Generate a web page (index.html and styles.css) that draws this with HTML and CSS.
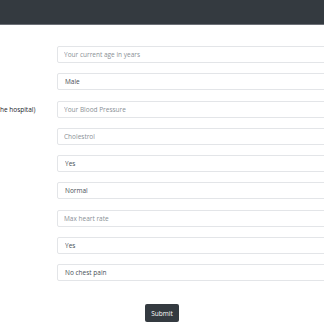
FILE: index.html
```html
<!DOCTYPE html>
<html lang="en">
<head>
  <meta charset="UTF-8" />
  <meta name="viewport" content="width=device-width, initial-scale=1.0"/>
  <title>Heart Disease Prediction</title>
  <link rel="stylesheet" href="styles.css">
</head>
<body>
  <nav class="navbar"></nav>

  <form class="predict-form">
    <div class="form-row">
      <label for="age">Age</label>
      <input type="text" id="age" class="form-control" placeholder="Your current age in years" />
    </div>
    <div class="form-row">
      <label for="sex">Sex</label>
      <select id="sex" class="form-control">
        <option>Male</option>
        <option>Female</option>
      </select>
    </div>
    <div class="form-row">
      <label for="bp">Resting blood pressure (in mm Hg on admission to the hospital)</label>
      <input type="text" id="bp" class="form-control" placeholder="Your Blood Pressure" />
    </div>
    <div class="form-row">
      <label for="chol">Serum cholestoral in mg/dl</label>
      <input type="text" id="chol" class="form-control" placeholder="Cholestrol" />
    </div>
    <div class="form-row">
      <label for="fbs">Fasting blood sugar</label>
      <select id="fbs" class="form-control">
        <option>Yes</option>
        <option>No</option>
      </select>
    </div>
    <div class="form-row">
      <label for="ecg">Resting ECG results</label>
      <select id="ecg" class="form-control">
        <option>Normal</option>
        <option>Abnormal</option>
      </select>
    </div>
    <div class="form-row">
      <label for="thalach">Maximum heart rate</label>
      <input type="text" id="thalach" class="form-control" placeholder="Max heart rate" />
    </div>
    <div class="form-row">
      <label for="exang">Exercise induced angina</label>
      <select id="exang" class="form-control">
        <option>Yes</option>
        <option>No</option>
      </select>
    </div>
    <div class="form-row">
      <label for="cp">Chest pain type</label>
      <select id="cp" class="form-control">
        <option>No chest pain</option>
        <option>Typical angina</option>
      </select>
    </div>

    <div class="submit-row">
      <button type="submit" class="btn-dark">Submit</button>
    </div>
  </form>
</body>
</html>
```

FILE: styles.css
```css
html, body {
  margin: 0;
  padding: 0;
  overflow: hidden;
}

body {
  font-family: "Open Sans", "Noto Sans", Arial, sans-serif;
  font-size: 6.5px;
  color: #212529;
  background: #fff;
}

.navbar {
  height: 24px;
  background-color: #343a40;
  border-bottom: 1px solid #6c7077;
}

.predict-form {
  margin: 21px 0 0 -157px;
  width: 570px;
}

.form-row {
  display: grid;
  grid-template-columns: 214px 1fr;
  align-items: center;
  margin-bottom: 10.3px;
}

.form-row label {
  white-space: nowrap;
}

.form-control {
  box-sizing: border-box;
  height: 17px;
  width: 100%;
  padding: 0 6px;
  font-family: inherit;
  font-size: 6.5px;
  color: #495057;
  background: #fff;
  border: 1px solid #e3e5e8;
  border-radius: 2px;
  outline: none;
}

.form-control::placeholder {
  color: #8a9096;
}

select.form-control {
  appearance: none;
  -webkit-appearance: none;
  padding-left: 7px;
}

.submit-row {
  display: flex;
  justify-content: center;
  margin: 23px 0 0 157px;
  width: 324px;
}

.btn-dark {
  height: 18px;
  padding: 0 6px;
  font-family: inherit;
  font-size: 6.5px;
  color: #fff;
  background-color: #343a40;
  border: none;
  border-radius: 2px;
  cursor: pointer;
}
```
